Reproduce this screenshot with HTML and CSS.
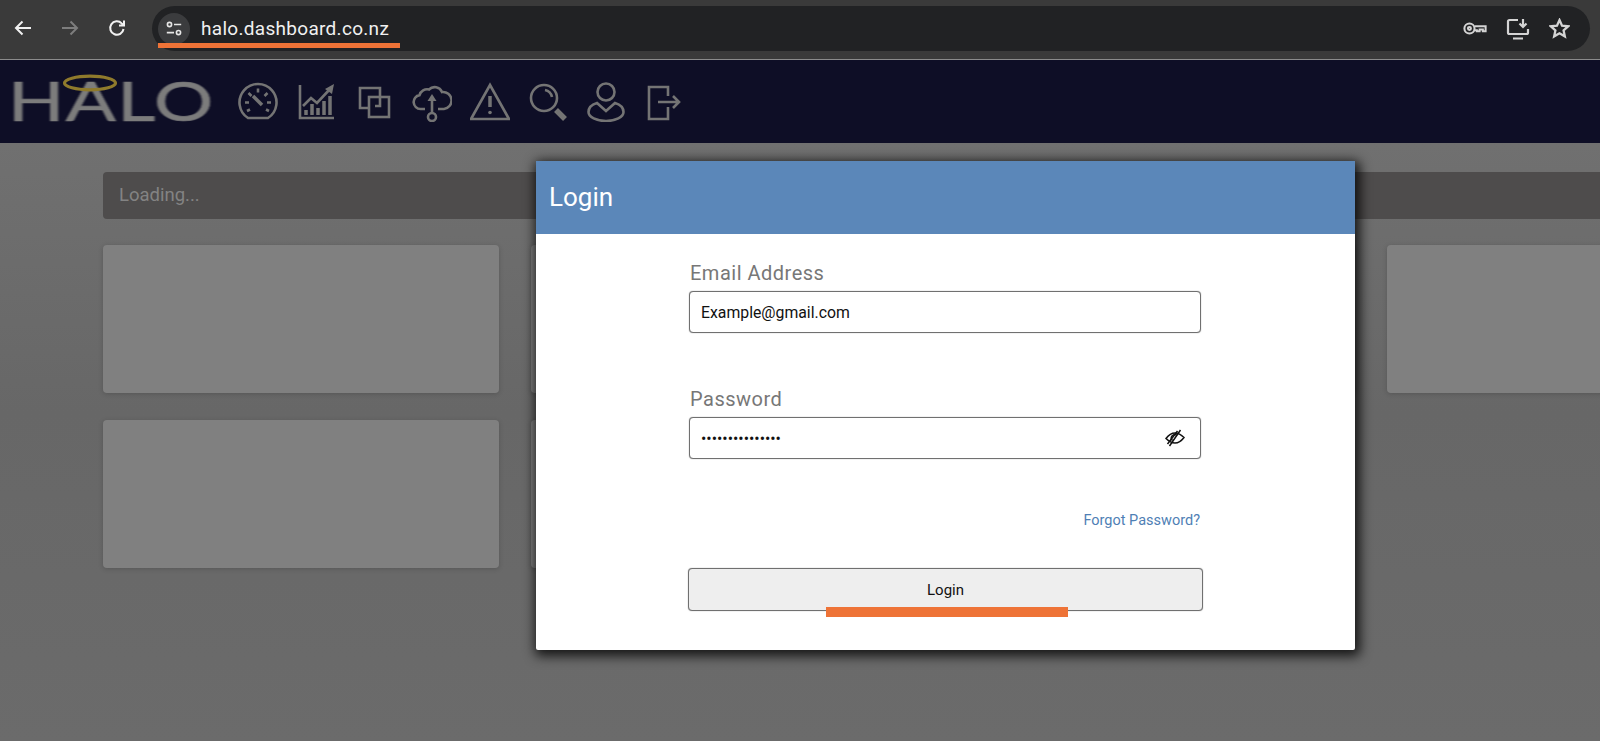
FILE: index.html
```html
<!DOCTYPE html>
<html lang="en">
<head>
<meta charset="utf-8">
<title>Halo Login</title>
<link rel="stylesheet" href="styles.css">
</head>
<body>
<div class="page">
  <header class="browser">
    <div class="browser-nav">
      <svg class="b-icon" viewBox="0 0 20 20"><path d="M18 10H3M9.500 3.500 3 10l6.500 6.500"/></svg>
      <svg class="b-icon b-dim" viewBox="0 0 20 20"><path d="M2 10h15M10.500 3.500 17 10l-6.500 6.500"/></svg>
      <svg class="b-icon" viewBox="0 0 20 20"><path d="M16.500 11a6.700 6.700 0 1 1-1.800-5.600L17 7.500M17 2.500v5h-5"/></svg>
    </div>
    <div class="omnibox">
      <span class="site-chip">
        <svg class="chip-icon" viewBox="0 0 20 20"><circle cx="5" cy="5" r="2.300"/><path d="M10 5h8M2 14h8"/><circle cx="15" cy="14" r="2.300"/></svg>
      </span>
      <span class="url">halo.dashboard.co.nz</span>
      <span class="url-mark"></span>
      <div class="omni-actions">
        <svg class="key" viewBox="0 0 26 16"><circle cx="7" cy="8" r="5.500"/><circle cx="7" cy="8" r="1.600"/><path d="M12.500 5.500H24.500V11H21.500V9H18V11H15V10H12.500"/></svg>
        <svg class="install" viewBox="0 0 24 22"><path d="M12 2H3.500A1.500 1.500 0 0 0 2 3.500v11A1.500 1.500 0 0 0 3.500 16h17a1.500 1.500 0 0 0 1.500-1.500V11M7 20.500h10M17 1v7.500M13.500 5.500 17 9l3.500-3.500"/></svg>
        <svg class="star" viewBox="0 0 20 20"><path d="m10 2 2.400 5.300 5.800.6-4.300 3.900 1.200 5.700L10 14.600l-5.100 2.900 1.200-5.700L1.800 7.900l5.800-.6z"/></svg>
      </div>
    </div>
  </header>

  <nav class="topnav">
    <div class="logo">
      <span class="logo-text">HALO</span>
      <svg class="halo-ring" viewBox="0 0 56 18"><ellipse cx="28" cy="9" rx="25.500" ry="6.800"/></svg>
    </div>
    <div class="nav-icons">
      <svg class="nav-icon" viewBox="0 0 40 40"><path d="M10 36A18.500 18.500 0 1 1 30 36Z"/><path d="M20 6.500v4M7 20.500h4M29 20.500h4M10.500 11l3 3M29.500 11l-3 3M9 29l3-1.500M31 29l-3-1.500"/><path class="thick" d="m15 14 9 9"/></svg>
      <svg class="nav-icon" viewBox="0 0 40 40"><path d="M4 3v33h34"/><path d="m7 24 8-8 6 5 13-14"/><path class="solid" d="m29 7 9-5-2 10z"/><path class="thick" d="M10 33v-5M16 33V22M22 33v-7M28 33V19M34 33V14"/></svg>
      <svg class="nav-icon" viewBox="0 0 40 40"><path d="M15 26H6V6h20v9"/><rect x="15" y="15" width="20" height="20"/><path d="M26 15v9h-5"/></svg>
      <svg class="nav-icon" viewBox="0 0 40 40"><path d="M13 27H8.500a7 7 0 0 1-1-13.900A8 8 0 0 1 17 7.500 8 8 0 0 1 30 10a8.500 8.500 0 0 1 2 17h-6"/><path d="M20 32V18"/><path class="solid" d="m20 12 4.500 7h-9z"/><circle cx="20" cy="35" r="4"/></svg>
      <svg class="nav-icon" viewBox="0 0 40 40"><path d="M20 3 39 37H1Z"/><path class="thick" d="M20 14v11"/><circle class="solid" cx="20" cy="30.500" r="1.800"/></svg>
      <svg class="nav-icon" viewBox="0 0 40 40"><circle cx="16" cy="16" r="13"/><path d="M17 8a9 9 0 0 1 7 7"/><path class="wide" d="m28 28 9 9"/></svg>
      <svg class="nav-icon" viewBox="0 0 40 40"><circle cx="20" cy="10" r="8.500"/><path d="M11 21c-5 1.500-8.500 5-8.500 9 0 5 8 9 17.500 9s17.500-4 17.500-9c0-4-3.500-7.500-8.500-9L20 29Z"/></svg>
      <svg class="nav-icon" viewBox="0 0 40 40"><path d="M24 14V5H5v32h19V25"/><path d="M14 20h21M29 14l6 6-6 6"/></svg>
    </div>
  </nav>

  <main class="content">
    <div class="loading-bar">Loading...</div>
    <div class="card-grid">
      <div class="card"></div>
      <div class="card"></div>
      <div class="card"></div>
      <div class="card"></div>
      <div class="card"></div>
      <div class="card"></div>
    </div>
  </main>

  <section class="modal">
    <h1 class="modal-title">Login</h1>
    <form class="login-form">
      <label class="field-label" for="email">Email Address</label>
      <div class="field">
        <input class="field-input" id="email" type="text" value="Example@gmail.com">
      </div>
      <label class="field-label label-password" for="password">Password</label>
      <div class="field">
        <input class="field-input" id="password" type="password" value="123456789012345">
        <svg class="eye-off" viewBox="0 0 20 18"><path d="M1 9.500C4 5.500 7 4 10 4c3 0 6 1.500 9 4.500-3 4-6 5.500-9 5.500s-6-1.500-9-4.500Z"/><path d="M7.500 11.500A3 3 0 0 1 12 6.500"/><path d="M15.500 1 4.500 17M12.500 2 2.500 15"/></svg>
      </div>
      <a class="forgot" href="#">Forgot Password?</a>
      <button class="login-btn" type="button">Login</button>
    </form>
    <span class="btn-mark"></span>
  </section>
</div>
</body>
</html>
```
FILE: styles.css
```css
* { box-sizing: border-box; }
html, body { margin: 0; height: 100%; }
body { font-family: Roboto, "Liberation Sans", sans-serif; overflow: hidden; background: #6a6a6a; }
.page { position: relative; width: 1600px; height: 741px; overflow: hidden; display: flex; flex-direction: column; }

/* browser chrome */
.browser { height: 60px; flex: none; display: flex; align-items: flex-start; padding: 6px 10px 0 13px; background: #3a3a3a; border-bottom: 1px solid #8b8b8b; }
.browser-nav { display: flex; gap: 27px; width: 139px; flex: none; padding-top: 12px; }
.b-icon { width: 20px; height: 20px; fill: none; stroke: #f1f1f1; stroke-width: 2; }
.b-dim { stroke: #7d7d7d; }
.omnibox { position: relative; flex: 1; height: 45px; display: flex; align-items: center; background: #212224; border-radius: 23px; padding-left: 6px; }
.site-chip { width: 32px; height: 32px; border-radius: 50%; background: #3b3c3e; display: flex; align-items: center; justify-content: center; flex: none; }
.chip-icon { width: 18px; height: 18px; fill: none; stroke: #e6e6e6; stroke-width: 1.800; }
.url { margin-left: 11px; font-size: 19px; letter-spacing: .3px; color: #f0f0f0; margin-top: -1px; }
.url-mark { position: absolute; left: 6px; top: 37px; width: 242px; height: 5px; background: #ee7337; }
.omni-actions { margin-left: auto; display: flex; align-items: center; gap: 19px; padding-right: 20px; }
.omni-actions svg { fill: none; stroke: #d4d4d4; stroke-width: 2.200; }
.key { width: 24px; height: 15px; }
.install { width: 24px; height: 22px; }
.star { width: 21px; height: 21px; }

/* app nav */
.topnav { height: 83px; flex: none; display: flex; align-items: center; padding-left: 12px; background: #0e0e26; }
.logo { position: relative; width: 226px; flex: none; height: 83px; }
.logo-text { position: absolute; left: -4px; top: 7px; transform: scaleX(1.345); transform-origin: left center; font-family: Lato, sans-serif; font-weight: 400; font-size: 55px; line-height: 66px; letter-spacing: 1px; color: #7c7c7c; -webkit-text-stroke: .7px #7c7c7c; filter: blur(.6px); }
.halo-ring { position: absolute; left: 50px; top: 14px; width: 56px; height: 18px; fill: none; stroke: #8f7a2c; stroke-width: 3.200; filter: blur(.5px); }
.nav-icons { display: flex; gap: 18px; }
.nav-icon { width: 40px; height: 40px; fill: none; stroke: #747474; stroke-width: 2.600; filter: blur(.35px); }
.nav-icon .thick { stroke-width: 3.500; }
.nav-icon .wide { stroke-width: 5.500; }
.nav-icon .solid { fill: #747474; stroke: none; }

/* dimmed page */
.content { flex: 1; padding: 29px 0 0 103px; background: linear-gradient(180deg, #707070 0%, #676767 45%, #6b6b6b 100%); }
.loading-bar { width: 1600px; height: 47px; display: flex; align-items: center; padding: 0 0 2px 16px; background: #4e4c4c; border-radius: 4px; font-size: 18.500px; color: #838383; }
.card-grid { display: grid; grid-template-columns: repeat(4, 396px); grid-auto-rows: 148px; gap: 27px 32px; margin-top: 26px; }
.card { background: #808080; border-radius: 4px; box-shadow: 0 1px 5px rgba(0, 0, 0, .18); }
.card:nth-child(n+5) { grid-row: 2; }
.card:nth-child(6) { grid-column: 2; }
.card:nth-child(5) { grid-column: 1; }

/* modal */
.modal { position: absolute; left: 536px; top: 161px; width: 819px; height: 489px; background: #fff; border-radius: 2px; box-shadow: 2px 3px 12px 3px rgba(0, 0, 0, .8); }
.modal-title { margin: 0; height: 73px; display: flex; align-items: center; padding: 0 0 2px 13px; background: #5b87b9; color: #fff; font-size: 26px; font-weight: 400; }
.login-form { width: 512px; margin-left: 153px; padding-top: 27px; display: flex; flex-direction: column; }
.field-label { height: 24px; margin: 0 0 6px 1px; font-size: 20px; line-height: 24px; color: #777; letter-spacing: .5px; }
.label-password { margin-top: 54px; margin-bottom: 6px; }
.field { height: 42px; display: flex; align-items: center; border: 1px solid #707070; border-radius: 4px; box-shadow: 0 0 1px #777; padding: 0 15px 0 11px; background: #fff; }
.field-input { flex: 1; min-width: 0; border: 0; padding: 0; outline: 0; background: transparent; font-family: inherit; font-size: 15.800px; color: #111; }
.eye-off { width: 20px; height: 18px; flex: none; fill: none; stroke: #111; stroke-width: 1.500; }
.forgot { align-self: flex-end; height: 20px; margin: 52px 1px 0 0; font-size: 14.500px; line-height: 20px; color: #4f7fb5; text-decoration: none; }
.login-btn { height: 43px; margin: 37px -2px 0 -1px; background: #eee; border: 1px solid #707070; border-radius: 4px; box-shadow: 0 0 1px #777; font-family: inherit; font-size: 15px; color: #111; }
.btn-mark { position: absolute; left: 290px; top: 446px; width: 242px; height: 10px; background: #ee7337; }
```
